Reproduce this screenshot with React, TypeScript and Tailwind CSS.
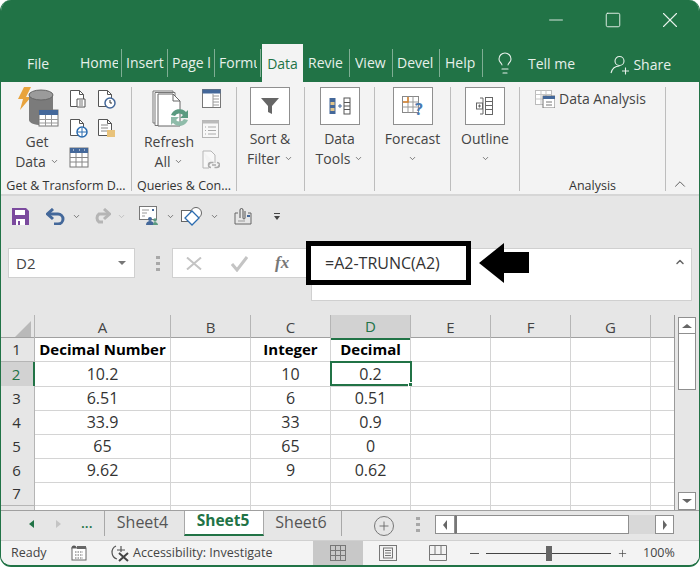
import React from 'react';
import { ChevronDown, ChevronUp, Lightbulb, Minus, Plus, Square, X } from 'lucide-react';

const FONT = { fontFamily: '"Open Sans", "Noto Sans", sans-serif' };

// labels are cut short in the window, as in the narrow ribbon
const TABS: { label: string; width: number; pad: number }[] = [
  { label: 'Home', width: 42, pad: 0 },
  { label: 'Insert', width: 46, pad: 4 },
  { label: 'Page l', width: 47, pad: 4 },
  { label: 'Formu', width: 46, pad: 4 },
];
const TABS_AFTER: { label: string; width: number; pad: number }[] = [
  { label: 'Revie', width: 47, pad: 5 },
  { label: 'View', width: 43, pad: 5 },
  { label: 'Devel', width: 47, pad: 4 },
  { label: 'Help', width: 43, pad: 5 },
];

const COLUMNS = ['A', 'B', 'C', 'D', 'E', 'F', 'G', ''];
const ROWS: string[][] = [
  ['Decimal Number', '', 'Integer', 'Decimal', '', '', '', ''],
  ['10.2', '', '10', '0.2', '', '', '', ''],
  ['6.51', '', '6', '0.51', '', '', '', ''],
  ['33.9', '', '33', '0.9', '', '', '', ''],
  ['65', '', '65', '0', '', '', '', ''],
  ['9.62', '', '9', '0.62', '', '', '', ''],
  ['', '', '', '', '', '', '', ''],
];

const Caret = ({ className = '' }: { className?: string }) => (
  <ChevronDown className={`h-[9px] w-[9px] text-[#555] ${className}`} strokeWidth={2} />
);

const PageIcon = ({ children }: { children?: React.ReactNode }) => (
  <svg width="20" height="20" viewBox="0 0 20 20" fill="none">
    <path d="M1.500 1.500h9l4 4v12h-13z" fill="#fff" stroke="#555" />
    <path d="M10.500 1.500v4h4" stroke="#555" />
    {children}
  </svg>
);

const TableIcon = () => (
  <svg width="20" height="21" viewBox="0 0 20 21" fill="none">
    <rect x="1" y="1" width="18" height="19" fill="#fff" stroke="#777" />
    <rect x="1" y="1" width="18" height="5" fill="#44689a" />
    <path d="M1 10.500h18M1 15h18M7 6v14M13 6v14" stroke="#888" />
    <path d="M4 3h1M10 3h1M15 3h1" stroke="#fff" />
  </svg>
);

const GetDataIcon = () => (
  <svg width="42" height="42" viewBox="0 0 42 42" fill="none">
    <path d="M7 0h7l-5 10h5L3 23l3-11H1z" fill="#e8a33d" />
    <path d="M12 8v25c0 3 6 5 12 5s12-2 12-5V8z" fill="#7b7b7b" />
    <ellipse cx="24" cy="8" rx="12" ry="5" fill="#9b9b9b" stroke="#666" />
    <rect x="22" y="23" width="19" height="16" fill="#fff" stroke="#777" />
    <rect x="22" y="23" width="19" height="5" fill="#44689a" />
    <path d="M22 32.500h19M22 36h19M28.500 28v11M34.500 28v11" stroke="#999" />
  </svg>
);

const RefreshIcon = () => (
  <svg width="38" height="40" viewBox="0 0 38 40" fill="none">
    <path d="M1 1h20v32H1z" fill="#fff" stroke="#777" />
    <path d="M3 2.500h20v33H3z" fill="#fff" stroke="#777" />
    <path d="M6 4h15l7 7v25H6z" fill="#fff" stroke="#666" />
    <path d="M21 4v7h7" stroke="#666" />
    <path d="M19 25a9 9 0 0 1 15-3l2-2v8h-8l3-3a5 5 0 0 0-8 1z" fill="#5a9a80" />
    <path d="M36 30a9 9 0 0 1-15 3l-2 2v-8h8l-3 3a5 5 0 0 0 8-1z" fill="#8fbcaa" />
  </svg>
);

const FilterIcon = () => (
  <svg width="20" height="20" viewBox="0 0 20 20">
    <path d="M1 2h18l-7 8v8l-4-2v-6z" fill="#666" />
  </svg>
);

const RibbonButton = ({ children }: { children: React.ReactNode }) => (
  <div className="flex h-[38px] w-[40px] items-center justify-center border border-[#8f8f8f] bg-white">{children}</div>
);

const Group = ({ width, label, children }: { width: number; label?: string; children: React.ReactNode }) => (
  <div style={{ width }} className="relative flex h-[104px] shrink-0 flex-col border-r border-[#bdbdbd]">
    <div className="flex-1">{children}</div>
    <div className="-mb-[6px] h-[22px] truncate text-center text-[12.500px] leading-[22px] text-[#333]">{label}</div>
  </div>
);

const BigLabel = ({ lines, caret }: { lines: string[]; caret?: boolean }) => (
  <div className="mt-[4px] text-center text-[14px] leading-[19.500px] text-[#444]">
    {lines.map((l, i) => (
      <div key={l} className="flex items-center justify-center gap-1">
        {l}
        {caret && i === lines.length - 1 && <Caret />}
      </div>
    ))}
  </div>
);

const RibbonBar = () => (
  <div className="flex h-[114px] border-b-[2px] border-[#d6d6d6] bg-[#f3f3f3] pt-[5px]">
    <Group width={131} label="Get & Transform D...">
      <div className="flex pl-[6px]">
        <div className="flex w-[62px] flex-col items-center">
          <GetDataIcon />
          <div className="-mt-[1px] -ml-[2px]"><BigLabel lines={['Get', 'Data']} caret /></div>
        </div>
        <div className="flex flex-col gap-[9px] pt-[2px]">
          <PageIcon><path d="M8 10h8v8H8z" fill="#fff" stroke="#555" /><path d="M10 12h4M10 14h4M10 16h4" stroke="#777" /></PageIcon>
          <PageIcon><circle cx="13" cy="14" r="5" fill="#fff" stroke="#2b6cb0" strokeWidth="1.500" /><path d="M13 10v9M8 14h10" stroke="#2b6cb0" /></PageIcon>
          <TableIcon />
        </div>
        <div className="ml-[8px] flex flex-col gap-[9px] pt-[2px]">
          <PageIcon><circle cx="13" cy="14" r="5" fill="#fff" stroke="#44689a" strokeWidth="1.500" /><path d="M13 11v3h2" stroke="#333" /></PageIcon>
          <PageIcon><path d="M4 7h7M4 10h7M4 13h7" stroke="#888" /><path d="M10 12h8v7h-8z" fill="#e8c27a" /></PageIcon>
        </div>
      </div>
    </Group>
    <Group width={105} label="Queries & Con...">
      <div className="flex pl-[8px]">
        <div className="flex w-[62px] flex-col items-center pt-[3px]">
          <RefreshIcon />
          <div className="-mt-[2px] -ml-[4px]"><BigLabel lines={['Refresh', 'All']} caret /></div>
        </div>
        <div className="flex flex-col gap-[12px] pt-[2px]">
          <svg width="19" height="19" viewBox="0 0 19 19" fill="none">
            <rect x="0.500" y="0.500" width="18" height="18" fill="#fff" stroke="#777" />
            <rect x="0.500" y="0.500" width="18" height="4" fill="#44689a" />
            <path d="M11 7h6M11 10h6M11 13h6M11 16h6M11 5v13" stroke="#999" />
          </svg>
          <svg width="17" height="18" viewBox="0 0 17 18" fill="none">
            <rect x="0.500" y="0.500" width="16" height="17" fill="#f8f8f8" stroke="#b5b5b5" />
            <rect x="0.500" y="0.500" width="16" height="3" fill="#bbb" />
            <path d="M6 7h8M6 10.500h8M6 14h8M3 7h1M3 10.500h1M3 14h1" stroke="#aaa" />
          </svg>
          <svg width="18" height="19" viewBox="0 0 18 19" fill="none">
            <path d="M1 1h8l4 4v8M1 1v17h6" stroke="#b5b5b5" fill="#f8f8f8" />
            <path d="M7 15a2.500 2.500 0 0 1 2.500-2.500h2M17 15a2.500 2.500 0 0 1-2.500 2.500h-2M9 17.500a2.500 2.500 0 0 1 0-5M15 12.500a2.500 2.500 0 0 1 0 5M10 15h4" stroke="#aaa" strokeWidth="1.500" />
          </svg>
        </div>
      </div>
    </Group>
    <Group width={68}>
      <div className="flex flex-col items-center pr-[1px]">
        <RibbonButton><FilterIcon /></RibbonButton>
        <BigLabel lines={['Sort &', 'Filter']} caret />
      </div>
    </Group>
    <Group width={70}>
      <div className="flex flex-col items-center">
        <RibbonButton>
          <svg width="22" height="18" viewBox="0 0 22 18" fill="none">
            <rect x="0.500" y="1" width="6" height="16" fill="#44689a" />
            <rect x="1.500" y="5" width="4" height="3" fill="#e2c58b" />
            <rect x="1.500" y="11" width="4" height="3" fill="#e2c58b" />
            <rect x="15" y="1" width="6" height="16" fill="#fff" stroke="#555" />
            <path d="M15 5.500h6M15 9h6M15 12.500h6" stroke="#555" />
            <path d="M9 9h4M11 7v4" stroke="#44689a" />
          </svg>
        </RibbonButton>
        <BigLabel lines={['Data', 'Tools']} caret />
      </div>
    </Group>
    <Group width={76}>
      <div className="flex flex-col items-center">
        <RibbonButton>
          <svg width="22" height="20" viewBox="0 0 22 20" fill="none">
            <rect x="0.500" y="0.500" width="16" height="16" fill="#fff" stroke="#888" />
            <path d="M6 .500v16M11 .500v16M.500 6h16M.500 11h16" stroke="#999" />
            <path d="M1 6h5V1" stroke="#d9822b" strokeWidth="1.500" />
            <text x="13" y="19" fontSize="16" fontWeight="700" fill="#4a7ab0" fontFamily="Open Sans">?</text>
          </svg>
        </RibbonButton>
        <BigLabel lines={['Forecast']} />
        <Caret className="mx-auto mt-[5px]" />
      </div>
    </Group>
    <Group width={69}>
      <div className="flex flex-col items-center">
        <RibbonButton>
          <svg width="18" height="18" viewBox="0 0 18 18" fill="none" stroke="#666">
            <rect x="0.500" y="6" width="6" height="6" />
            <path d="M2 9h3M3.500 7.500v3M4 1h3v16H4" />
            <rect x="9.500" y="0.500" width="7" height="17" />
            <path d="M9.500 4.500h7M9.500 8.500h7M9.500 12.500h7" />
          </svg>
        </RibbonButton>
        <BigLabel lines={['Outline']} />
        <Caret className="mx-auto mt-[5px]" />
      </div>
    </Group>
    <Group width={146} label="Analysis">
      <div className="flex items-center gap-[4px] pl-[15px] pt-[3px]">
        <svg width="20" height="18" viewBox="0 0 20 18" fill="none">
          <rect x="0.500" y="0.500" width="16" height="14" fill="#fff" stroke="#bbb" />
          <path d="M.500 4.500h16M.500 9h16M6 .500v14M11 .500v14" stroke="#c5c5c5" />
          <rect x="8" y="6" width="12" height="12" fill="#fff" stroke="#777" />
          <rect x="8" y="6" width="12" height="3" fill="#44689a" />
          <path d="M11 12h6M11 15h6" stroke="#777" />
        </svg>
        <span className="text-[14px] leading-[18px] text-[#444]">Data Analysis</span>
      </div>
    </Group>
    <div className="flex flex-1 items-end justify-center pb-[1px] pr-[5px]">
      <ChevronUp className="h-[18px] w-[18px] text-[#555]" strokeWidth={1.25} />
    </div>
  </div>
);

const RibbonTab = ({ label, width, pad }: { label: string; width: number; pad: number }) => (
  <div style={{ width }} className="flex items-center">
    <div style={{ paddingLeft: pad }} className="w-full border-r border-[#7fae94] pr-[3px]">
      <div className="overflow-hidden leading-[28px] whitespace-nowrap">{label}</div>
    </div>
  </div>
);

const TitleBar = () => (
  <div className="flex h-[82px] flex-col bg-[#217346] text-[#e6f0ea]">
    <div className="flex h-[44px] items-center justify-end pr-[1px] pb-[5px]">
      <div className="flex w-[57px] justify-center"><Minus className="h-[22px] w-[22px]" strokeWidth={1} /></div>
      <div className="flex w-[57px] justify-center"><Square className="h-[18px] w-[18px]" strokeWidth={1.25} /></div>
      <div className="flex w-[57px] justify-center"><X className="h-[26px] w-[26px]" strokeWidth={1} /></div>
    </div>
    <div className="flex h-[38px] items-stretch text-[14px]">
      <div className="flex w-[79px] items-center justify-center pr-[5px]">File</div>
      {TABS.map(t => <RibbonTab key={t.label} {...t} />)}
      <div className="ml-[1px] flex w-[41px] items-center justify-center bg-[#f3f3f3] text-[#217346]">Data</div>
      {TABS_AFTER.map(t => <RibbonTab key={t.label} {...t} />)}
      <div className="flex items-center pl-[10px]">
        <Lightbulb className="h-[24px] w-[24px]" strokeWidth={1.1} />
        <span className="ml-[11px]">Tell me</span>
      </div>
      <div className="ml-auto flex items-center pr-[28px] pt-[3px]">
        <svg width="20" height="20" viewBox="0 0 20 20" fill="none" stroke="currentColor" strokeWidth="1.100">
          <circle cx="9.500" cy="6" r="4.500" />
          <path d="M1 18c1-4 4-7 8.500-7M12 16h7M15.500 12.500v7" />
        </svg>
        <span className="ml-[3px]">Share</span>
      </div>
    </div>
  </div>
);

const QuickAccess = () => (
  <div className="flex h-[43px] items-center pl-[11px] pb-[3px]">
    <svg width="17" height="17" viewBox="0 0 17 17">
      <path d="M0 0h14l3 3v14H0z" fill="#7b4a9e" />
      <rect x="3" y="2" width="10" height="5" fill="#fff" />
      <rect x="4" y="11" width="9" height="6" fill="#fff" />
      <rect x="6" y="13" width="2" height="4" fill="#7b4a9e" />
    </svg>
    <svg className="ml-[17px]" width="19" height="17" viewBox="0 0 19 17" fill="none">
      <path d="M2 6h10a5 5 0 0 1 0 10H8" stroke="#44689a" strokeWidth="3" />
      <path d="M7 1 1.500 6 7 11" stroke="#44689a" strokeWidth="3" />
    </svg>
    <Caret className="ml-[7px]" />
    <svg className="ml-[11px]" width="19" height="17" viewBox="0 0 19 17" fill="none">
      <path d="M17 6H7a5 5 0 0 0 0 8h4" stroke="#b5b5b5" strokeWidth="3" />
      <path d="M12 1l5.500 5L12 11" stroke="#b5b5b5" strokeWidth="3" />
    </svg>
    <ChevronDown className="ml-[6px] h-[9px] w-[9px] text-[#b5b5b5]" strokeWidth={2} />
    <svg className="ml-[13px]" width="20" height="20" viewBox="0 0 20 20" fill="none">
      <rect x="0.500" y="0.500" width="17" height="13" fill="#fff" stroke="#777" />
      <path d="M3 4h7M3 7h5M3 10h3" stroke="#999" />
      <rect x="13" y="3" width="2" height="2" fill="#44689a" />
      <circle cx="11" cy="13" r="2" fill="#44689a" />
      <path d="M7 19c0-3 2-4 4-4s4 1 4 4z" fill="#44689a" />
      <circle cx="16" cy="14" r="1.700" fill="#5a9a80" />
      <path d="M14 19c0-2 1-3 2-3s3 1 3 3z" fill="#5a9a80" />
    </svg>
    <Caret className="ml-[7px]" />
    <svg className="ml-[6px]" width="22" height="19" viewBox="0 0 22 19" fill="none">
      <rect x="0.500" y="3.500" width="12" height="11" fill="#fff" stroke="#666" />
      <circle cx="15" cy="6" r="5.500" fill="#fff" stroke="#666" />
      <path d="M11 4l7 7-7 7-7-7z" fill="#fff" stroke="#2b6cb0" strokeWidth="1.300" />
    </svg>
    <Caret className="ml-[7px]" />
    <svg className="ml-[15px]" width="18" height="18" viewBox="0 0 18 18" fill="none">
      <path d="M1 6h3M14 6h3v11H1V6" stroke="#666" />
      <path d="M6 11V3a1.500 1.500 0 0 1 3 0v8a1 1 0 0 0 2 0V4" stroke="#555" />
      <path d="M4 14h7" stroke="#999" />
      <rect x="13" y="8" width="3" height="2" fill="#44689a" />
    </svg>
    <div className="ml-[22px] flex flex-col items-center gap-[2px]">
      <div className="h-[1px] w-[6px] bg-[#444]" />
      <div className="h-0 w-0 border-x-[3px] border-t-[4px] border-x-transparent border-t-[#444]" />
    </div>
  </div>
);

const Grip = () => (
  <div className="flex flex-col gap-[3px]">
    <div className="h-[3px] w-[4px] bg-[#a8a8a8]" />
    <div className="h-[3px] w-[4px] bg-[#a8a8a8]" />
    <div className="h-[3px] w-[4px] bg-[#a8a8a8]" />
  </div>
);

const FormulaBar = () => (
  <div className="relative flex h-[76px] items-start pl-[7px] pt-[9px]">
    <div className="flex h-[30px] w-[127px] items-center justify-between border border-[#d0d0d0] bg-white pl-[7px] pr-[8px] text-[15px] text-[#444]">
      D2
      <div className="h-0 w-0 border-x-[4px] border-t-[4px] border-x-transparent border-t-[#777]" />
    </div>
    <div className="flex h-[30px] w-[37px] items-center justify-center pl-[9px]"><Grip /></div>
    <div className="flex h-[30px] w-[140px] items-center border-y border-l border-[#d0d0d0] bg-white pl-[13px]">
      <svg width="16" height="13" viewBox="0 0 16 13" fill="none">
        <path d="M1 .500 15 12.500M15 .500 1 12.500" stroke="#c4c4c4" strokeWidth="2" />
      </svg>
      <svg className="ml-[29px]" width="17" height="17" viewBox="0 0 17 17" fill="none">
        <path d="M1 9l5 6L16 2" stroke="#c4c4c4" strokeWidth="3" />
      </svg>
      <span className="ml-[27px] text-[17px] leading-[18px] font-bold text-[#777] italic" style={{ fontFamily: '"Liberation Serif", serif' }}>fx</span>
    </div>
    <div className="mr-[7px] ml-[-1px] flex h-[53px] flex-1 items-start justify-end border border-[#d0d0d0] bg-white pr-[5px] pt-[7px]">
      <ChevronUp className="h-[12px] w-[12px] text-[#666]" strokeWidth={3} />
    </div>
    {/* annotation on top of the screenshot */}
    <div className="absolute left-[305px] top-[2px] flex h-[44px] w-[165px] items-center border-[5px] border-black bg-white pl-[14px] text-[16px] text-[#333]">
      =A2-TRUNC(A2)
    </div>
    <svg className="absolute left-[478px] top-[4px]" width="50" height="40" viewBox="0 0 50 40">
      <path d="M0 20 25 0v9h25v21H25v10z" fill="#000" />
    </svg>
  </div>
);

const Sheet = () => (
  <div className="flex h-[195px] text-[16px]">
    <div className="w-[674px] overflow-hidden border-r border-[#9a9a9a]">
      <div className="grid h-[23px] grid-cols-[34px_136px_80px_80px_80px_80px_80px_80px_24px] border-b border-[#a0a0a0] bg-[#e6e6e6] text-[15px] text-[#444]">
        <div className="relative border-r border-[#b5b5b5]">
          <div className="absolute right-[3px] bottom-[3px] h-0 w-0 border-b-[16px] border-l-[16px] border-b-[#b9b9b9] border-l-transparent" />
        </div>
        {COLUMNS.map((c, i) => (
          <div
            key={i}
            className={`flex items-center justify-center border-r border-[#b5b5b5] ${c === 'D' ? 'border-b-2 border-b-[#217346] bg-[#d2d2d2] text-[#217346]' : ''}`}
          >
            {c}
          </div>
        ))}
      </div>
      {[...ROWS, null].map((row, r) => (
        <div key={r} className={`grid grid-cols-[34px_136px_80px_80px_80px_80px_80px_80px_24px] bg-white text-[#333] ${row ? 'h-[24px]' : 'h-[4px]'}`}>
          <div className={`flex items-center justify-center border-r border-[#b5b5b5] pr-[2px] text-[15px] ${row ? 'border-b' : ''} ${r === 1 ? 'border-r-2 border-r-[#217346] bg-[#d2d2d2] text-[#217346]' : 'bg-[#e6e6e6] text-[#333]'}`}>
            {row ? r + 1 : ''}
          </div>
          {(row ?? COLUMNS.map(() => '')).map((cell, c) => (
            <div
              key={c}
              className={`relative flex items-center justify-center border-r border-[#d4d4d4] ${row ? 'border-b' : ''} ${r === 0 ? 'text-[15px] font-bold text-black' : ''}`}
            >
              {cell}
              {r === 1 && c === 3 && (
                <div className="absolute -top-[1px] -left-[1px] h-[25px] w-[82px] border-2 border-[#217346]">
                  <div className="absolute -right-[3px] -bottom-[3px] h-[5px] w-[5px] border border-white bg-[#217346]" />
                </div>
              )}
            </div>
          ))}
        </div>
      ))}
    </div>
    <div className="flex w-[24px] flex-col bg-[#e6e6e6] pl-[3px] pr-[3px] pt-[2px]">
      <div className="flex h-[17px] shrink-0 items-center justify-center border border-[#8f8f8f] bg-white">
        <div className="h-0 w-0 border-x-[5px] border-b-[4px] border-x-transparent border-b-[#666]" />
      </div>
      <div className="h-[56px] border border-t-0 border-[#8f8f8f] bg-white" />
      <div className="flex-1" />
      <div className="flex h-[18px] shrink-0 items-center justify-center border border-[#8f8f8f] bg-white">
        <div className="h-0 w-0 border-x-[5px] border-t-[4px] border-x-transparent border-t-[#666]" />
      </div>
    </div>
  </div>
);

const SheetTabs = () => (
  <div className="flex h-[30px] items-start border-t border-[#a0a0a0] bg-[#e6e6e6] text-[16px]">
    <div className="flex h-[25px] w-[104px] items-center border-r border-[#a8a8a8] pl-[28px]">
      <div className="h-0 w-0 border-y-[4px] border-r-[5px] border-y-transparent border-r-[#217346]" />
      <div className="ml-[22px] h-0 w-0 border-y-[4px] border-l-[5px] border-y-transparent border-l-[#c4c4c4]" />
      <span className="ml-[20px] -mt-[3px] text-[14px] font-semibold text-[#217346]">...</span>
    </div>
    <div className="flex h-[25px] w-[79px] items-center justify-center pb-[3px] pr-[4px] text-[#555]">Sheet4</div>
    <div className="flex h-[25px] w-[80px] items-center justify-center border-x border-b-[2px] border-[#a8a8a8] border-b-[#217346] bg-white pb-[3px] pr-[2px] text-[15.500px] font-bold text-[#217346]">Sheet5</div>
    <div className="flex h-[25px] w-[78px] items-center justify-center border-r border-[#a8a8a8] pb-[3px] pr-[3px] text-[#555]">Sheet6</div>
    <div className="ml-[32px] mt-[5px] flex h-[20px] w-[20px] items-center justify-center rounded-full border border-[#777]">
      <Plus className="h-[14px] w-[14px] text-[#666]" strokeWidth={1.5} />
    </div>
    <div className="ml-[22px] mt-[6px]"><Grip /></div>
    <div className="ml-[15px] mt-[4px] flex h-[19px] w-[239px]">
      <div className="flex w-[20px] items-center justify-center border border-[#8f8f8f] bg-white">
        <div className="h-0 w-0 border-y-[5px] border-r-[4px] border-y-transparent border-r-[#666]" />
      </div>
      <div className="w-[174px] border border-l-2 border-[#8f8f8f] border-l-[#777] bg-white" />
      <div className="flex-1 bg-[#d8d8d8]" />
      <div className="flex w-[19px] items-center justify-center border border-[#8f8f8f] bg-white">
        <div className="h-0 w-0 border-y-[5px] border-l-[4px] border-y-transparent border-l-[#666]" />
      </div>
    </div>
  </div>
);

const StatusBar = () => (
  <div className="flex h-[25px] items-center border-t border-[#d0d0d0] bg-[#f3f3f3] text-[12.500px] text-[#444]">
    <span className="ml-[10px] w-[60px]">Ready</span>
    <svg width="16" height="16" viewBox="0 0 16 16" fill="none">
      <circle cx="3" cy="3" r="2.500" fill="#555" />
      <rect x="1" y="3" width="14" height="12" fill="#fff" stroke="#666" />
      <rect x="6" y="1" width="9" height="3" fill="#666" />
      <path d="M4 7h8M4 10h8M4 13h8" stroke="#666" strokeDasharray="1.500 1" />
    </svg>
    <svg className="ml-[23px]" width="20" height="18" viewBox="0 0 20 18" fill="none">
      <path d="M6 2a7 7 0 0 0 1 13" stroke="#555" strokeWidth="1.200" />
      <path d="M7 6h8M11 2v6" stroke="#555" strokeWidth="1.200" />
      <path d="M9 9l9 8M18 9l-9 8" stroke="#444" strokeWidth="2" />
    </svg>
    <span className="ml-[3px] w-[180px] whitespace-nowrap">Accessibility: Investigate</span>
    <div className="flex h-full w-[50px] items-center justify-center bg-[#c8c8c8]">
      <svg width="16" height="16" viewBox="0 0 16 16" fill="none" stroke="#777">
        <rect x="0.500" y="0.500" width="15" height="15" />
        <path d="M5.500 .500v15M10.500 .500v15M.500 5.500h15M.500 10.500h15" />
      </svg>
    </div>
    <svg className="ml-[16px]" width="18" height="16" viewBox="0 0 18 16" fill="none" stroke="#777">
      <rect x="0.500" y="0.500" width="17" height="15" />
      <rect x="4.500" y="3" width="9" height="10" />
      <path d="M6 5.500h6M6 8h6M6 10.500h6" />
    </svg>
    <svg className="ml-[32px]" width="18" height="16" viewBox="0 0 18 16" fill="none" stroke="#777">
      <path d="M.500 .500h17v15H.500zM.500 9.500h17M6 .500v9M12 .500v9" />
    </svg>
    <div className="ml-[23px] h-[1px] w-[9px] bg-[#555]" />
    <div className="relative ml-[7px] h-[1px] w-[125px] bg-[#444]">
      <div className="absolute left-[60px] -top-[7px] h-[15px] w-[6px] bg-[#666]" />
    </div>
    <Plus className="ml-[6px] h-[11px] w-[11px] text-[#444]" strokeWidth={1.5} />
    <span className="ml-[15px]">100%</span>
  </div>
);

export default function App() {
  return (
    <div className="h-[567px] w-[700px] bg-white" style={FONT}>
      <div className="h-full overflow-hidden rounded-[11px] border-x border-b-2 border-[#217346] bg-[#e6e6e6]">
        <TitleBar />
        <RibbonBar />
        <QuickAccess />
        <FormulaBar />
        <Sheet />
        <SheetTabs />
        <StatusBar />
      </div>
    </div>
  );
}
